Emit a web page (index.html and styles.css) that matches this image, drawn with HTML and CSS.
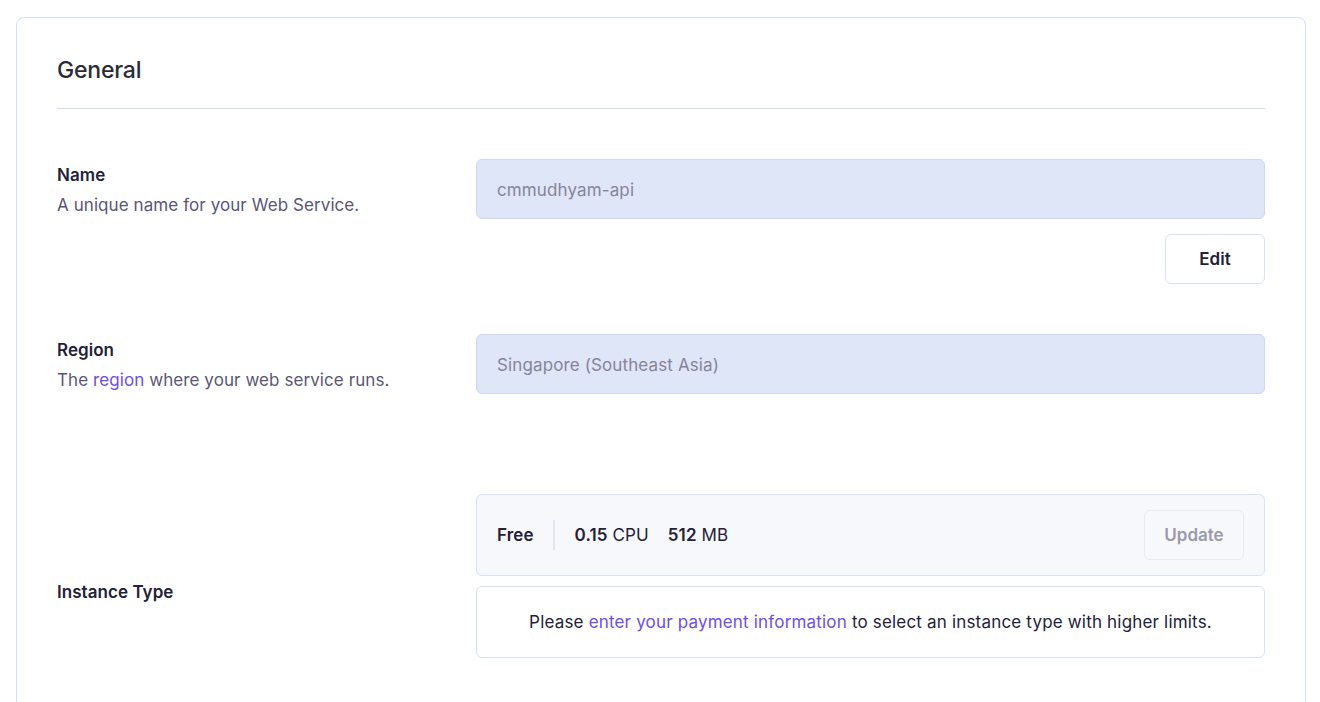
FILE: index.html
```html
<!DOCTYPE html>
<html lang="en">
<head>
<meta charset="utf-8">
<title>General settings</title>
<link rel="stylesheet" href="styles.css">
</head>
<body>
<section class="card">
  <h2 class="card-title">General</h2>
  <div class="row row-name">
    <div class="label-col">
      <div class="label">Name</div>
      <div class="desc">A unique name for your Web Service.</div>
    </div>
    <div class="field-col">
      <div class="input">cmmudhyam-api</div>
      <div class="actions"><button class="btn">Edit</button></div>
    </div>
  </div>
  <div class="row row-region">
    <div class="label-col">
      <div class="label">Region</div>
      <div class="desc">The <a href="#" class="link">region</a> where your web service runs.</div>
    </div>
    <div class="field-col">
      <div class="input">Singapore (Southeast Asia)</div>
    </div>
  </div>
  <div class="row row-instance">
    <div class="label-col center">
      <div class="label">Instance Type</div>
    </div>
    <div class="field-col instance-col">
      <div class="plan">
        <span class="plan-name">Free</span>
        <span class="plan-sep"></span>
        <span class="spec"><b>0.15</b> CPU</span>
        <span class="spec"><b>512</b> MB</span>
        <button class="btn btn-disabled">Update</button>
      </div>
      <p class="notice">Please <a href="#" class="link">enter your payment information</a> to select an instance type with higher limits.</p>
    </div>
  </div>
</section>
</body>
</html>
```
FILE: styles.css
```css
* { box-sizing: border-box; }
html, body { margin: 0; padding: 0; background: #ffffff; }
body {
  font-family: "Inter", "Lato", sans-serif;
  color: #23213a;
  padding: 17px 14px 0 16px;
  height: 702px;
  overflow: hidden;
}
.card {
  border: 1px solid #d3def2;
  border-radius: 8px;
  padding: 36px 40px 40px 40px;
  min-height: 720px;
}
.card-title {
  margin: 0;
  font-size: 23px;
  line-height: 32px;
  font-weight: 500;
  color: #2b2a38;
  padding-bottom: 22px;
  border-bottom: 1px solid #d3def2;
  letter-spacing: -0.2px;
}
.row {
  display: grid;
  grid-template-columns: 419px 1fr;
}
.row-name { margin-top: 50px; }
.row-region { margin-top: 50px; }
.row-instance { margin-top: 100px; }
.label-col { padding-top: 3px; }
.label-col.center { align-self: center; padding-top: 0; }
.label {
  font-size: 17px;
  line-height: 26px;
  font-weight: 600;
  color: #23213a;
  letter-spacing: 0.05px;
}
.desc {
  margin-top: 4px;
  font-size: 17px;
  line-height: 26px;
  color: #5a5677;
  letter-spacing: 0.08px;
}
.link { color: #6c4ee8; text-decoration: none; }
.input {
  height: 60px;
  border: 1px solid #cbd8f2;
  background: #dfe6f8;
  border-radius: 6px;
  padding: 1px 20px 0 20px;
  display: flex;
  align-items: center;
  font-size: 17px;
  letter-spacing: 0.12px;
  color: #878399;
}
.actions {
  display: flex;
  justify-content: flex-end;
  margin-top: 15px;
}
.btn {
  font-family: inherit;
  height: 50px;
  width: 100px;
  border: 1px solid #d9e2f4;
  border-radius: 6px;
  background: #ffffff;
  font-size: 17px;
  font-weight: 600;
  color: #23213a;
  padding-top: 1px;
  cursor: pointer;
}
.instance-col { padding-bottom: 32px; }
.plan {
  height: 82px;
  border: 1px solid #d9e2f5;
  background: #f7f8fc;
  border-radius: 6px;
  display: flex;
  align-items: center;
  padding: 0 20px 0 20px;
  font-size: 17px;
  letter-spacing: 0.12px;
  color: #23213a;
}
.plan-name { font-weight: 600; }
.plan-sep {
  width: 2px;
  height: 30px;
  background: #dfe5f4;
  margin: 0 20px 0 19px;
}
.spec { margin-right: 19px; }
.spec b { font-weight: 600; }
.btn-disabled {
  margin-left: auto;
  width: 100px;
  height: 50px;
  background: #f7f8fc;
  border-color: #e6eaf5;
  color: #9b99ad;
  cursor: default;
}
.notice {
  margin: 10px 0 0 0;
  height: 72px;
  line-height: 71px;
  border: 1px solid #d9e2f5;
  border-radius: 6px;
  text-align: center;
  font-size: 17px;
  letter-spacing: 0.18px;
  color: #23213a;
}
```
